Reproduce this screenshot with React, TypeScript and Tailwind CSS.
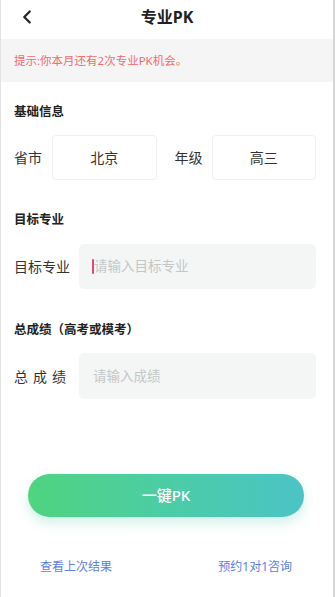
import { ChevronLeft } from 'lucide-react';

const FONT = { fontFamily: '"Noto Sans", "Noto Sans CJK SC", sans-serif' };

const SectionHeading = ({ title, className = '' }: { title: string; className?: string }) => (
  <h2 className={`text-[12.5px] leading-[18px] font-bold text-[#222] ${className}`}>{title}</h2>
);

const App = () => {
  return (
    <div
      className="h-[597px] bg-white border-l border-r-2 border-l-[#e2e2e2] border-r-[#d6d6d6] flex flex-col"
      style={FONT}
    >
      {/* Header */}
      <div className="h-[39px] relative flex items-start justify-center pt-[7px]">
        <ChevronLeft className="absolute left-[15px] top-[6px] text-[#222]" size={22} strokeWidth={2.4} />
        <h1 className="text-[16px] leading-[20px] font-bold text-[#222]">专业PK</h1>
      </div>

      {/* Notice */}
      <div className="h-[43px] bg-[#f5f5f5] flex items-center pl-[13px]">
        <p className="text-[11.5px] text-[#f26b6e]">提示:你本月还有2次专业PK机会。</p>
      </div>

      <div className="pl-[13px] pr-[17px]">
        {/* 基础信息 */}
        <SectionHeading title="基础信息" className="mt-[21px]" />
        <div className="mt-[14px] flex items-center">
          <span className="w-[38px] text-[14px] text-[#333]">省市</span>
          <div className="flex-1 h-[45px] rounded-[4px] border border-[#f0f0f0] flex items-center justify-center text-[14px] text-[#333]">
            北京
          </div>
          <span className="ml-[18px] w-[37px] text-[14px] text-[#333]">年级</span>
          <div className="flex-1 h-[45px] rounded-[4px] border border-[#f0f0f0] flex items-center justify-center text-[14px] text-[#333]">
            高三
          </div>
        </div>

        {/* 目标专业 */}
        <SectionHeading title="目标专业" className="mt-[31px]" />
        <div className="mt-[15px] flex items-center">
          <span className="w-[65px] text-[14px] text-[#333]">目标专业</span>
          <div className="flex-1 h-[45px] rounded-[5px] bg-[#f4f6f6] flex items-center pl-[13px]">
            <span className="w-[2px] h-[15px] bg-[#e9457a] rounded-full" />
            <span className="text-[13.5px] text-[#c4c7c7]">请输入目标专业</span>
          </div>
        </div>

        {/* 总成绩 */}
        <SectionHeading title="总成绩（高考或模考）" className="mt-[32px]" />
        <div className="mt-[14px] flex items-center">
          <span className="w-[65px] text-[14px] text-[#333] tracking-[5px]">总成绩</span>
          <div className="flex-1 h-[46px] rounded-[5px] bg-[#f4f6f6] flex items-center pl-[14px]">
            <span className="text-[13.5px] text-[#c4c7c7]">请输入成绩</span>
          </div>
        </div>
      </div>

      {/* Button */}
      <div className="mt-[75px] pl-[27px] pr-[29px]">
        <button className="w-full h-[43px] rounded-full bg-gradient-to-r from-[#4fd47f] to-[#4cc4c6] text-white text-[15px] font-medium shadow-[0_6px_12px_rgba(76,200,170,0.25)]">
          一键PK
        </button>
      </div>

      {/* Links */}
      <div className="mt-[41px] flex justify-between pl-[39px] pr-[41px] text-[12px] leading-[18px] text-[#5d80e6]">
        <span>查看上次结果</span>
        <span>预约1对1咨询</span>
      </div>
    </div>
  );
};

export default App;
